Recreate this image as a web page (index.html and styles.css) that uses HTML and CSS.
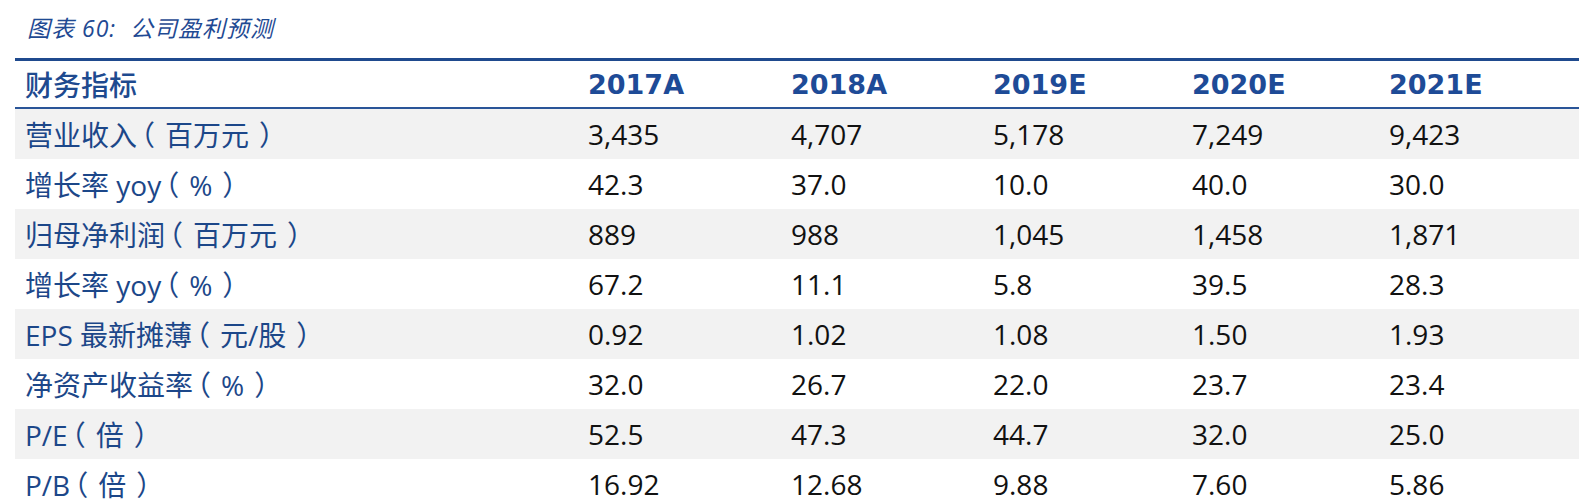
FILE: index.html
```html
<!DOCTYPE html>
<html lang="zh-CN">
<head>
<meta charset="utf-8">
<title>图表 60: 公司盈利预测</title>
<link rel="stylesheet" href="styles.css">
</head>
<body>
<div class="wrap">
  <div class="caption">图表 60:&nbsp;&nbsp;公司盈利预测</div>
  <table class="fin">
    <colgroup>
      <col class="c-label"><col class="c1"><col class="c2"><col class="c3"><col class="c4"><col class="c5">
    </colgroup>
    <thead>
      <tr>
        <th class="lbl">财务指标</th>
        <th>2017A</th><th>2018A</th><th>2019E</th><th>2020E</th><th>2021E</th>
      </tr>
    </thead>
    <tbody>
      <tr class="alt"><td class="lbl">营业收入<span class="po">（</span>百万元<span class="pc">）</span></td><td>3,435</td><td>4,707</td><td>5,178</td><td>7,249</td><td>9,423</td></tr>
      <tr><td class="lbl">增长率 yoy<span class="po">（</span>%<span class="pc">）</span></td><td>42.3</td><td>37.0</td><td>10.0</td><td>40.0</td><td>30.0</td></tr>
      <tr class="alt"><td class="lbl">归母净利润<span class="po">（</span>百万元<span class="pc">）</span></td><td>889</td><td>988</td><td>1,045</td><td>1,458</td><td>1,871</td></tr>
      <tr><td class="lbl">增长率 yoy<span class="po">（</span>%<span class="pc">）</span></td><td>67.2</td><td>11.1</td><td>5.8</td><td>39.5</td><td>28.3</td></tr>
      <tr class="alt"><td class="lbl">EPS 最新摊薄<span class="po">（</span>元/股<span class="pc">）</span></td><td>0.92</td><td>1.02</td><td>1.08</td><td>1.50</td><td>1.93</td></tr>
      <tr><td class="lbl">净资产收益率<span class="po">（</span>%<span class="pc">）</span></td><td>32.0</td><td>26.7</td><td>22.0</td><td>23.7</td><td>23.4</td></tr>
      <tr class="alt"><td class="lbl">P/E<span class="po">（</span>倍<span class="pc">）</span></td><td>52.5</td><td>47.3</td><td>44.7</td><td>32.0</td><td>25.0</td></tr>
      <tr><td class="lbl">P/B<span class="po">（</span>倍<span class="pc">）</span></td><td>16.92</td><td>12.68</td><td>9.88</td><td>7.60</td><td>5.86</td></tr>
    </tbody>
  </table>
</div>
</body>
</html>
```

FILE: styles.css
```css
html, body {
  margin: 0;
  padding: 0;
  background: #ffffff;
}

.wrap {
  padding-left: 15px;
  width: 1564px;
}

.caption {
  height: 58px;
  box-sizing: border-box;
  padding: 13px 0 0 12px;
  line-height: 30px;
  font-family: "Open Sans", "Noto Sans CJK SC", sans-serif;
  font-style: italic;
  font-size: 23px;
  letter-spacing: 1px;
  color: #1f4a93;
}

.fin {
  width: 1564px;
  border-collapse: collapse;
  table-layout: fixed;
  border-top: 3px solid #1f4a8e;
}

.c-label { width: 567px; }
.c1 { width: 203px; }
.c2 { width: 202px; }
.c3 { width: 199px; }
.c4 { width: 197px; }
.c5 { width: 196px; }

.fin th,
.fin td {
  padding: 0 0 0 6px;
  text-align: left;
  white-space: nowrap;
}

.fin thead th {
  height: 46px;
  border-bottom: 2px solid #2a5598;
  font-family: "DejaVu Sans", sans-serif;
  font-weight: bold;
  font-size: 27px;
  color: #1e4b97;
  vertical-align: middle;
}

.fin thead th.lbl {
  font-family: "Noto Sans CJK SC", sans-serif;
  font-weight: 500;
  font-size: 28px;
  color: #1e4a8f;
}

.fin tbody td {
  height: 50px;
  font-family: "Open Sans", sans-serif;
  font-size: 28px;
  color: #111111;
  vertical-align: middle;
}

.fin .lbl {
  padding-left: 10px;
}

.fin tbody td.lbl {
  font-family: "Open Sans", "Noto Sans CJK SC", sans-serif;
  color: #1c4789;
}

.po,
.pc {
  font-feature-settings: "halt" 1;
}

.po {
  padding: 0 10px 0 4px;
}

.pc {
  padding: 0 4px 0 10px;
}

.fin tbody tr.alt td {
  background: #f2f2f2;
}
```
